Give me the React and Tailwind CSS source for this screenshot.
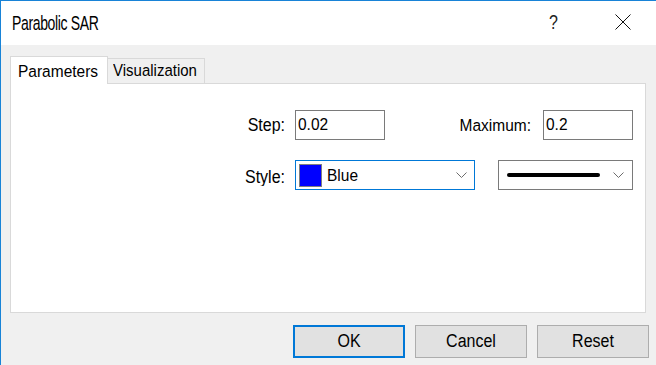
export default function App() {
  const Chevron = () => (
    <svg width="11" height="6" viewBox="0 0 11 6" className="shrink-0">
      <path d="M0.5 0.5 L5.5 5.5 L10.5 0.5" fill="none" stroke="#6d6d6d" strokeWidth="1" />
    </svg>
  );

  return (
    <div className="w-[656px] h-[365px] bg-[#f0f0f0] border-t border-l border-[#1883d7] flex flex-col overflow-hidden text-black font-['Liberation_Sans',Arial,sans-serif]">
      {/* title bar */}
      <div className="h-[44px] bg-white flex items-center pl-[11px] shrink-0">
        <span className="inline-block text-[14px] tracking-[-0.35px] scale-y-[1.45] mt-[1px]">Parabolic SAR</span>
        <span className="ml-auto inline-block text-[16px] text-[#222] scale-y-125 -mt-[1px]">?</span>
        <svg width="16" height="16" viewBox="0 0 16 16" className="ml-[57px] mr-[25px] -mt-[2px]">
          <path d="M0.5 0.5 L15.5 15.5 M15.5 0.5 L0.5 15.5" stroke="#111" strokeWidth="1" fill="none" />
        </svg>
      </div>

      {/* body */}
      <div className="pl-[9px] pt-[11px]">
        <div className="flex items-end h-[27px]">
          <div className="relative z-10 w-[98px] h-[28px] -mb-px bg-white border-l border-t border-r border-[#d9d9d9] flex items-center pl-[7px]">
            <span className="inline-block text-[15.5px] scale-y-110">Parameters</span>
          </div>
          <div className="w-[97px] h-[25px] bg-[#f0f0f0] border-t border-r border-[#d9d9d9] flex items-center pl-[5px]">
            <span className="inline-block text-[15px] scale-y-110 mt-[1px]">Visualization</span>
          </div>
        </div>

        <div className="w-[636px] h-[230px] bg-white border border-[#d9d9d9] pt-[26px]">
          <div className="flex items-center h-[30px]">
            <div className="w-[274px] text-right text-[16px]">
              <span className="inline-block scale-y-110">Step:</span>
            </div>
            <div className="ml-[10px] w-[90px] h-[30px] border border-[#7a7a7a] flex items-center pl-[2px] pb-[2px] text-[15.5px]">
              <span className="inline-block scale-y-110">0.02</span>
            </div>
            <div className="w-[146px] text-right text-[15.5px]">
              <span className="inline-block scale-y-110">Maximum:</span>
            </div>
            <div className="ml-[12px] w-[90px] h-[30px] border border-[#7a7a7a] flex items-center pl-[2px] pb-[2px] text-[15.5px]">
              <span className="inline-block scale-y-110">0.2</span>
            </div>
          </div>

          <div className="flex items-center h-[30px] mt-[20px]">
            <div className="w-[274px] text-right text-[16px]">
              <span className="inline-block scale-y-110 mt-[4px]">Style:</span>
            </div>
            <div className="ml-[10px] w-[180px] h-[30px] border border-[#0078d7] flex items-center pl-[3px] pr-[7px]">
              <div className="w-[23px] h-[23px] border border-[#7f7f7f] bg-[#0000ff]" />
              <span className="ml-[5px] inline-block text-[15.5px] scale-y-110">Blue</span>
              <div className="ml-auto">
                <Chevron />
              </div>
            </div>
            <div className="ml-[23px] w-[135px] h-[30px] border border-[#7a7a7a] flex items-center pl-[8px] pr-[8px]">
              <div className="w-[93px] h-[4px] rounded-full bg-black" />
              <div className="ml-auto">
                <Chevron />
              </div>
            </div>
          </div>
        </div>
      </div>

      {/* buttons */}
      <div className="flex justify-end gap-[10px] pr-[7px] mt-[12px]">
        <button className="w-[112px] h-[33px] bg-[#e1e1e1] border-2 border-[#0078d7] text-[16px]">
          <span className="inline-block scale-y-110">OK</span>
        </button>
        <button className="w-[112px] h-[33px] bg-[#e1e1e1] border border-[#adadad] text-[16px]">
          <span className="inline-block scale-y-110">Cancel</span>
        </button>
        <button className="w-[112px] h-[33px] bg-[#e1e1e1] border border-[#adadad] text-[16px]">
          <span className="inline-block scale-y-110">Reset</span>
        </button>
      </div>
    </div>
  );
}
